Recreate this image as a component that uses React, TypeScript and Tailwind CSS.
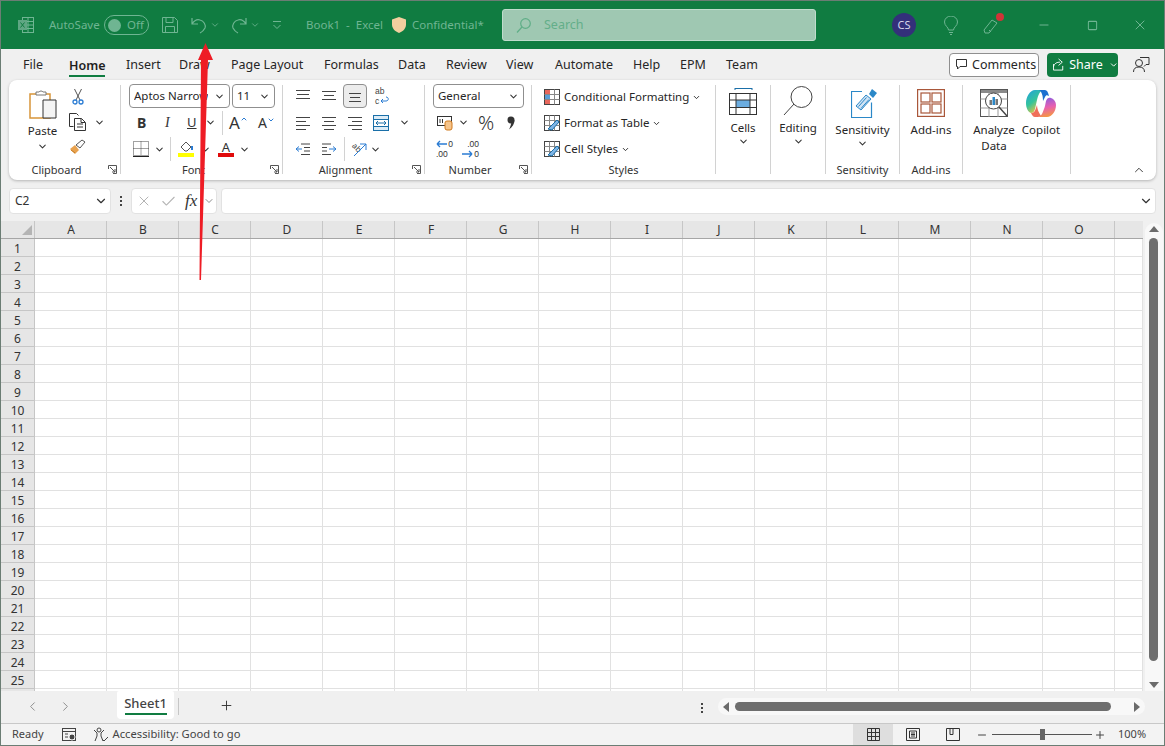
import { Check, ChevronDown, ChevronLeft, ChevronRight, ChevronUp, Minus, Plus, Square, X } from "lucide-react";

const FONT = "font-['Noto_Sans','Liberation_Sans',sans-serif]";

const TABS = [
  { label: "File", w: "w-[46px]" },
  { label: "Home", w: "w-[57px]" },
  { label: "Insert", w: "w-[53px]" },
  { label: "Draw", w: "w-[52px]" },
  { label: "Page Layout", w: "w-[93px]" },
  { label: "Formulas", w: "w-[74px]" },
  { label: "Data", w: "w-[48px]" },
  { label: "Review", w: "w-[60px]" },
  { label: "View", w: "w-[49px]" },
  { label: "Automate", w: "w-[78px]" },
  { label: "Help", w: "w-[47px]" },
  { label: "EPM", w: "w-[46px]" },
  { label: "Team", w: "w-[50px]" },
];

const COLS = ["A", "B", "C", "D", "E", "F", "G", "H", "I", "J", "K", "L", "M", "N", "O"];
const ROWS = Array.from({ length: 25 }, (_, i) => i + 1);

function Chev({ className = "" }: { className?: string }) {
  return <ChevronDown size={11} strokeWidth={2.2} className={`text-[#333] shrink-0 ${className}`} />;
}

function Lines({ rows }: { rows: [number, number, number][] }) {
  return (
    <svg width="16" height="16" viewBox="0 0 16 16" fill="none" stroke="#444">
      {rows.map(([a, b, y], i) => (
        <line key={i} x1={a} x2={b} y1={y} y2={y} />
      ))}
    </svg>
  );
}

function ExcelIcon() {
  return (
    <svg width="18" height="18" viewBox="0 0 18 18" fill="none" stroke="#6fb592" strokeWidth="1">
      <rect x="5.5" y="1.5" width="11" height="15" />
      <path d="M5.5 5.5h11M5.5 9h11M5.5 12.5h11M11 1.5v15" />
      <rect x="1.5" y="4.5" width="8" height="9" fill="#5fa683" stroke="#5fa683" />
      <path d="M3.5 6.5l4 5M7.5 6.5l-4 5" stroke="#107c41" />
    </svg>
  );
}

function TitleBar() {
  const dim = "text-[#6fb592]";
  return (
    <div className={`h-[48px] bg-[#107c41] flex items-center shrink-0 pl-[16px] ${dim} text-[11.5px] [&>*]:shrink-0`}>
      <ExcelIcon />
      <span className="ml-[14px] w-[48px] whitespace-nowrap">AutoSave</span>
      <span className="ml-[7px] w-[45px] h-[20px] rounded-full border border-[#6fb592] flex items-center pl-[3px]">
        <span className="w-[13px] h-[13px] rounded-full bg-[#6fb592]" />
        <span className="ml-[6px]">Off</span>
      </span>
      <svg className="ml-[13px]" width="16" height="16" viewBox="0 0 16 16" fill="none" stroke="#6fb592">
        <path d="M.5.5h12l3 3v12H.5zM4 .5v5h7v-5M3.5 15.500v-6h9v6" />
      </svg>
      <svg className="ml-[13px]" width="16" height="17" viewBox="0 0 16 17" fill="none" stroke="#6fb592" strokeWidth="1.2">
        <path d="M1 1v6h6M1 7c2-3 5-5 8-4 4 1 6 5 5 8-1 2-3 4-5 5" />
      </svg>
      <ChevronDown size={10} strokeWidth={2} className="ml-[3px]" />
      <svg className="ml-[11px]" width="16" height="17" viewBox="0 0 16 17" fill="none" stroke="#6fb592" strokeWidth="1.2">
        <path d="M15 1v6H9M15 7c-2-3-5-5-8-4-4 1-6 5-5 8 1 2 3 4 5 5" />
      </svg>
      <ChevronDown size={10} strokeWidth={2} className="ml-[3px]" />
      <svg className="ml-[12px]" width="10" height="10" viewBox="0 0 10 10" fill="none" stroke="#6fb592">
        <path d="M1 1.500h8M1.500 5l3.500 3.500L8.500 5" />
      </svg>
      <span className="ml-[24px] w-[78px] whitespace-pre">Book1  -  Excel</span>
      <svg className="ml-[8px]" width="14" height="16" viewBox="0 0 14 16">
        <path d="M7 0l7 2.500v5c0 4-3 7-7 8.500-4-1.500-7-4.500-7-8.500v-5z" fill="#f3cf9f" />
      </svg>
      <span className="ml-[6px] w-[71px] whitespace-nowrap">Confidential*</span>
      <div className="ml-[19px] w-[314px] h-[32px] rounded-[3px] bg-[#9fc8b2] border border-[#bfdccc] flex items-center pl-[13px] text-[#63ae89] text-[12.5px]">
        <svg width="15" height="15" viewBox="0 0 15 15" fill="none" stroke="#5fae87" strokeWidth="1.2">
          <circle cx="9.500" cy="5.500" r="4.800" />
          <path d="M6 9l-5 5.500" />
        </svg>
        <span className="ml-[13px]">Search</span>
      </div>
      <div className="ml-[76px] w-[24px] h-[24px] rounded-full bg-[#33307a] text-[#d6d6ea] text-[11px] flex items-center justify-center">CS</div>
      <svg className="ml-[28px]" width="14" height="19" viewBox="0 0 14 19" fill="none" stroke="#6fb592">
        <path d="M4.500 14c0-3-4-4-4-8a6.500 6 0 0 1 13 0c0 4-4 5-4 8zM5 16.500h4M6 18.500h2" />
      </svg>
      <div className="relative ml-[25px] w-[20px] h-[20px]">
        <svg width="20" height="20" viewBox="0 0 20 20" fill="none" stroke="#6fb592">
          <path d="M1 15l8-10 5 3-8 10H2zM6 15l2 2" />
        </svg>
        <span className="absolute right-[-1px] top-[-2px] w-[8px] h-[8px] rounded-full bg-[#d13438]" />
      </div>
      <Minus size={14} strokeWidth={1.7} className="ml-[34px]" />
      <Square size={11} strokeWidth={2.2} className="ml-[36px]" />
      <X size={16} strokeWidth={1.5} className="ml-[34px]" />
    </div>
  );
}

function TabRow() {
  return (
    <div className="h-[31px] flex items-center pl-[22px] pr-[14px] text-[12.5px] text-[#262626] shrink-0">
      {TABS.map((t) =>
        t.label === "Home" ? (
          <span key={t.label} className={`${t.w} h-[31px] flex`}>
            <span className="h-[28px] leading-[33px] border-b-[2px] border-[#107c41] font-semibold text-[#1f1f1f]">{t.label}</span>
          </span>
        ) : (
          <span key={t.label} className={`${t.w} pt-[2px]`}>{t.label}</span>
        )
      )}
      <button className="ml-auto w-[90px] h-[24px] bg-white border border-[#8f8f8f] rounded-[4px] flex items-center pl-[6px]">
        <svg width="11" height="11" viewBox="0 0 11 11" fill="none" stroke="#333">
          <path d="M.5 .5h10v7H4l-2.500 2.500v-2.500h-1z" />
        </svg>
        <span className="ml-[5px] pt-[1px]">Comments</span>
      </button>
      <button className="ml-[8px] w-[71px] h-[24px] bg-[#107c41] text-white rounded-[4px] flex items-center pl-[6px]">
        <svg width="12" height="13" viewBox="0 0 12 13" fill="none" stroke="#fff">
          <path d="M.5 6v6.500h10V8M.5 9c1-4 4-5 7-5M6 .5L10 4 6 7.500" />
        </svg>
        <span className="ml-[5px] pt-[1px]">Share</span>
        <ChevronDown size={10} strokeWidth={2.4} className="ml-[6px]" />
      </button>
      <svg className="ml-[15px]" width="17" height="17" viewBox="0 0 17 17" fill="none" stroke="#333">
        <circle cx="6" cy="7" r="3.500" />
        <path d="M.5 16c0-3.500 2-5 5.500-5s5.500 1.500 5.500 5M7 1.500h9v7h-3l-2 2" />
      </svg>
    </div>
  );
}

function Launcher() {
  return (
    <svg width="9" height="9" viewBox="0 0 9 9" fill="none" stroke="#555">
      <path d="M.5 4V.5H8.500V8.500H5M2 2l5 5M7 4v3H4" />
    </svg>
  );
}

function Group({ w, label, launcher = false, children }: { w: string; label?: string; launcher?: boolean; children: React.ReactNode }) {
  return (
    <div className={`${w} shrink-0 h-[89px] mt-[5px] border-r border-[#d2d2d2] flex flex-col relative`}>
      <div className="h-[77px] flex shrink-0">{children}</div>
      {label && <div className={`h-[12px] shrink-0 text-center leading-[12px] text-[11px] text-[#333] mt-[2px] ${launcher ? "pr-[16px]" : ""}`}>{label}</div>}
      {launcher && (
        <span className="absolute right-[3px] bottom-[0px]">
          <Launcher />
        </span>
      )}
    </div>
  );
}

function DropBox({ text, w }: { text: string; w: string }) {
  return (
    <div className={`${w} h-[24px] border border-[#8f8f8f] rounded-[4px] flex items-center justify-between px-[4px] text-[11.5px] text-[#262626]`}>
      <span className="truncate">{text}</span>
      <Chev />
    </div>
  );
}

function BigBtn({ w, label, icon, chev = false, offset = "mt-[3px]" }: { w: string; label: string; icon: React.ReactNode; chev?: boolean; offset?: string }) {
  return (
    <div className={`${w} flex flex-col items-center text-[11.5px] text-[#262626]`}>
      <div className={`${offset} h-[30px] flex items-center justify-center`}>{icon}</div>
      <div className="mt-[4px] leading-[16px] text-center whitespace-pre">{label}</div>
      {chev && <Chev />}
    </div>
  );
}

function ClipboardGroup() {
  return (
    <Group w="w-[112px]" label="Clipboard" launcher>
      <div className="ml-[19px] w-[29px] flex flex-col items-center text-[11.5px] text-[#262626]">
        <svg className="mt-[4px] shrink-0" width="28" height="30" viewBox="0 0 28 30" fill="none">
          <path d="M1 5h20v24H1z" fill="#fff" stroke="#d8953a" strokeWidth="1.5" />
          <path d="M7 6V3h3a2.500 2.500 0 0 1 4 0h3v3z" fill="#fff" stroke="#777" />
          <path d="M14 11h13v18H14z" fill="#f4f4f4" stroke="#333" />
        </svg>
        <span className="mt-[3px]">Paste</span>
        <Chev className="mt-[2px]" />
      </div>
      <div className="ml-[12px] w-[50px] flex flex-col text-[#333]">
        <svg className="ml-[3px] mt-[3px] shrink-0" width="12" height="17" viewBox="0 0 12 17" fill="none">
          <path d="M2.500 1L8 12M9.500 1L4 12" stroke="#555" />
          <circle cx="3" cy="14" r="2" stroke="#2b7cd3" strokeWidth="1.300" />
          <circle cx="9" cy="14" r="2" stroke="#2b7cd3" strokeWidth="1.300" />
        </svg>
        <div className="flex items-center mt-[8px]">
          <svg width="17" height="18" viewBox="0 0 17 18" fill="none" stroke="#333">
            <path d="M4.500 13.500H.5V.5h7l2 2M5.500 5.500h7l4 4v8h-11zM12 5.500v4h4M8 11h6M8 14h6" />
          </svg>
          <Chev className="ml-[8px]" />
        </div>
        <svg className="mt-[8px] shrink-0" width="17" height="16" viewBox="0 0 17 16">
          <path d="M1 10l5-4 4 5-4 4-2-2z" fill="#e8a24f" />
          <path d="M7 6l6-5 3 2-5 6z" fill="none" stroke="#555" />
          <path d="M2 11l4 3" stroke="#c67a1f" />
        </svg>
      </div>
    </Group>
  );
}

function FontGroup() {
  return (
    <Group w="w-[162px]" label="Font" launcher>
      <div className="pl-[8px] flex flex-col">
        <div className="flex gap-[2px] mt-[-1px] shrink-0">
          <DropBox text="Aptos Narrow" w="w-[101px]" />
          <DropBox text="11" w="w-[43px]" />
        </div>
        <div className="flex items-center h-[27px] mt-[1px] text-[#333] shrink-0">
          <span className="ml-[8px] w-[28px] text-[14px] font-bold">B</span>
          <span className="w-[22px] text-[14px] italic font-['Liberation_Serif',serif]">I</span>
          <span className="w-[18px] text-[13px] underline">U</span>
          <Chev />
          <span className="ml-[6px] w-px h-[24px] bg-[#d2d2d2]" />
          <span className="ml-[6px] text-[17px] leading-none">A</span>
          <ChevronUp size={8} strokeWidth={3} className="text-[#2b7cd3] mb-[8px]" />
          <span className="ml-[10px] text-[14px] leading-none">A</span>
          <ChevronDown size={8} strokeWidth={3} className="text-[#2b7cd3] mb-[6px]" />
        </div>
        <div className="flex items-center h-[26px] shrink-0">
          <svg className="ml-[4px]" width="16" height="16" viewBox="0 0 16 16" fill="none">
            <path d="M.5 .5h15v14H.5zM8 .5v14M.5 7.500h15" stroke="#444" strokeDasharray="1 1" />
            <path d="M0 15.500h16" stroke="#222" />
          </svg>
          <Chev className="ml-[5px]" />
          <span className="ml-[5px] w-px h-[24px] bg-[#d2d2d2]" />
          <div className="ml-[7px] flex flex-col items-center w-[16px]">
            <svg width="15" height="12" viewBox="0 0 15 12" fill="none" stroke="#555">
              <path d="M2 6l5-5 5 5-4 4H6z" />
              <path d="M13 5v4" stroke="#2b7cd3" strokeWidth="2" />
            </svg>
            <span className="w-[16px] h-[4px] bg-[#ffff00]" />
          </div>
          <Chev className="ml-[6px]" />
          <div className="ml-[7px] flex flex-col items-center w-[16px]">
            <span className="text-[13px] leading-[12px] text-[#333]">A</span>
            <span className="w-[16px] h-[4px] bg-[#e00b0b]" />
          </div>
          <Chev className="ml-[5px]" />
        </div>
      </div>
    </Group>
  );
}

function AlignmentGroup() {
  return (
    <Group w="w-[142px]" label="Alignment" launcher>
      <div className="pl-[12px] flex flex-col">
        <div className="flex items-center h-[24px] mt-[-1px] shrink-0">
          <span className="w-[26px]"><Lines rows={[[1, 15, 2.5], [2, 14, 6.5], [1, 15, 10.5]]} /></span>
          <span className="w-[26px]"><Lines rows={[[1, 15, 3.5], [3, 13, 7.5], [1, 15, 11.5]]} /></span>
          <span className="ml-[-4px] w-[24px] h-[24px] border border-[#8f8f8f] bg-[#ececec] rounded-[4px] flex items-center justify-center">
            <Lines rows={[[2, 14, 5.5], [3, 13, 9.5], [2, 14, 13.5]]} />
          </span>
          <svg className="ml-[7px]" width="16" height="20" viewBox="0 0 16 20" fill="none" fontFamily="'Liberation Sans', sans-serif">
            <text x="1" y="8" fontSize="8.5" fill="#444">ab</text>
            <text x="1" y="18" fontSize="8.5" fill="#444">c</text>
            <path d="M7 15h5c3 0 3-4 0-4M7 15l2-2M7 15l2 2" stroke="#2b7cd3" />
          </svg>
        </div>
        <div className="flex items-center h-[27px] mt-[1px] shrink-0">
          <span className="w-[26px]"><Lines rows={[[1, 15, 2.5], [1, 11, 6.5], [1, 15, 10.5], [1, 11, 14.5]]} /></span>
          <span className="w-[26px]"><Lines rows={[[1, 15, 2.5], [3, 13, 6.5], [1, 15, 10.5], [3, 13, 14.5]]} /></span>
          <span className="w-[26px]"><Lines rows={[[1, 15, 2.5], [5, 15, 6.5], [1, 15, 10.5], [5, 15, 14.5]]} /></span>
          <svg width="16" height="16" viewBox="0 0 16 16" fill="none">
            <rect x=".5" y=".5" width="15" height="15" stroke="#1a6fa8" fill="#dcecf7" />
            <path d="M.5 4.500h15M.5 11.500h15" stroke="#1a6fa8" />
            <rect x="1" y="5" width="14" height="6" fill="#fff" />
            <path d="M3 8h10M3 8l2-2M3 8l2 2M13 8l-2-2M13 8l-2 2" stroke="#1a6fa8" />
          </svg>
          <Chev className="ml-[10px]" />
        </div>
        <div className="flex items-center h-[26px] shrink-0">
          <svg className="mr-[10px]" width="16" height="16" viewBox="0 0 16 16" fill="none">
            <path d="M6 3h9M9 6.500h6M9 10h6M6 13.500h9" stroke="#444" />
            <path d="M1 8h6M1 8l3-2.500M1 8l3 2.500" stroke="#2b7cd3" />
          </svg>
          <svg className="mr-[7px]" width="16" height="16" viewBox="0 0 16 16" fill="none">
            <path d="M1 3h9M1 6.500h5M1 10h5M1 13.500h9" stroke="#444" />
            <path d="M8 8h7M15 8l-3-2.500M15 8l-3 2.500" stroke="#2b7cd3" />
          </svg>
          <span className="w-px h-[24px] bg-[#d2d2d2] mr-[6px]" />
          <svg width="17" height="16" viewBox="0 0 17 16" fill="none">
            <text x="1" y="8" fontSize="8" fill="#444" transform="rotate(45 4 6)">ab</text>
            <path d="M3 15L15 3M9 3h6v6" stroke="#2b7cd3" />
          </svg>
          <Chev className="ml-[2px]" />
        </div>
      </div>
    </Group>
  );
}

function NumberGroup() {
  return (
    <Group w="w-[107px]" label="Number" launcher>
      <div className="pl-[8px] flex flex-col">
        <div className="mt-[-1px] shrink-0">
          <DropBox text="General" w="w-[91px]" />
        </div>
        <div className="flex items-center h-[27px] mt-[1px] shrink-0">
          <svg className="ml-[4px]" width="16" height="16" viewBox="0 0 16 16" fill="none">
            <rect x=".5" y="1.500" width="14" height="9" stroke="#333" />
            <rect x="8" y="6" width="7" height="9" rx="2" fill="#f5c48b" stroke="#d07a1e" />
            <path d="M3 4v4M5.500 4v4" stroke="#333" />
          </svg>
          <Chev className="ml-[5px]" />
          <span className="ml-[9px] w-[29px] text-[20px] leading-none text-[#333] font-light">%</span>
          <svg width="8" height="14" viewBox="0 0 8 14">
            <circle cx="4" cy="4" r="3.500" fill="#333" />
            <path d="M7.500 4c0 4-2 7-5.500 9.500 1.500-3 2-5 2-6z" fill="#333" />
          </svg>
        </div>
        <div className="flex items-center h-[26px] gap-[9px] ml-[3px] shrink-0 font-['Liberation_Sans',sans-serif] text-[8.5px] leading-[10px] text-[#333]">
          <div className="w-[17px]">
            <div className="flex justify-between items-center h-[10px]">
              <svg width="11" height="8" viewBox="0 0 11 8" fill="none" stroke="#2b7cd3" strokeWidth="1.300">
                <path d="M1 4h10M1 4l3-3M1 4l3 3" />
              </svg>
              <span>0</span>
            </div>
            <div className="h-[10px]">.00</div>
          </div>
          <div className="w-[17px]">
            <div className="h-[10px] text-right">.00</div>
            <div className="flex justify-between items-center h-[10px]">
              <svg width="11" height="8" viewBox="0 0 11 8" fill="none" stroke="#2b7cd3" strokeWidth="1.300">
                <path d="M0 4h10M10 4L7 1M10 4L7 7" />
              </svg>
              <span>0</span>
            </div>
          </div>
        </div>
      </div>
    </Group>
  );
}

function StyleRow({ icon, text }: { icon: React.ReactNode; text: string }) {
  return (
    <div className="flex items-center h-[26px] text-[11.5px] text-[#262626] shrink-0">
      <span className="w-[20px]">{icon}</span>
      <span>{text}</span>
      <ChevronDown size={9} strokeWidth={2.4} className="ml-[3px]" />
    </div>
  );
}

function StylesGroup() {
  const tableIcon = (
    <svg width="16" height="16" viewBox="0 0 16 16" fill="none">
      <rect x=".5" y=".5" width="15" height="15" stroke="#444" />
      <path d="M.5 5.500h15M.5 10.500h15M5.500 .5v15M10.500 .5v15" stroke="#888" />
      <path d="M4 14L13 5l2 2-7 8z" fill="#7fb5e6" stroke="#1a6fa8" />
    </svg>
  );
  return (
    <Group w="w-[184px]" label="Styles">
      <div className="pl-[12px] flex flex-col mt-[-1px]">
        <StyleRow
          text="Conditional Formatting"
          icon={
            <svg width="16" height="16" viewBox="0 0 16 16" fill="none">
              <rect x=".5" y=".5" width="15" height="15" stroke="#444" />
              <path d="M.5 5.500h15M.5 10.500h15M10.500 .5v15" stroke="#888" />
              <rect x="1" y="1" width="5" height="4" fill="#e8675c" />
              <rect x="1" y="6" width="5" height="4" fill="#5a9fd8" />
              <rect x="1" y="11" width="5" height="4" fill="#e8675c" />
            </svg>
          }
        />
        <StyleRow text="Format as Table" icon={tableIcon} />
        <StyleRow text="Cell Styles" icon={tableIcon} />
      </div>
    </Group>
  );
}

function CellsIcon() {
  return (
    <svg width="29" height="27" viewBox="0 0 29 27" fill="none">
      <path d="M6 .5h17M6 0v2M23 0v2" stroke="#1a6fa8" />
      <rect x=".5" y="5.500" width="27" height="21" stroke="#333" />
      <rect x="7" y="12" width="14" height="8" fill="#6cade0" />
      <path d="M.5 12h27M.5 19.500h27M7 5.500v21M21 5.500v21" stroke="#333" />
    </svg>
  );
}

function MagnifierIcon() {
  return (
    <svg width="30" height="30" viewBox="0 0 30 30" fill="none" stroke="#444">
      <circle cx="18.500" cy="11" r="10.500" />
      <path d="M11 18L1 29" />
    </svg>
  );
}

function SensitivityIcon() {
  return (
    <svg className="ml-[4px]" width="27" height="30" viewBox="0 0 27 30" fill="none">
      <path d="M11 3.500H.5v26h20v-15" stroke="#2b88c8" strokeWidth="1.200" />
      <path d="M5 18L15 7l5 4-10 11z" fill="#cfe3f4" stroke="#2b88c8" />
      <path d="M18 6l3-5 5 4-4 5z" fill="#2b88c8" />
      <path d="M7.500 18.500l8-9M10 20.500l8-9" stroke="#2b88c8" />
    </svg>
  );
}

function AddinsIcon() {
  return (
    <svg width="28" height="28" viewBox="0 0 28 28" fill="none" stroke="#a9573a" strokeWidth="1.200">
      <rect x=".6" y=".6" width="26.800" height="26.800" />
      <rect x="4" y="4" width="9" height="9" />
      <rect x="15" y="4" width="9" height="9" />
      <rect x="4" y="15" width="9" height="9" />
      <rect x="15" y="15" width="9" height="9" />
    </svg>
  );
}

function AnalyzeIcon() {
  return (
    <svg width="28" height="28" viewBox="0 0 28 28" fill="none">
      <rect x=".5" y=".5" width="27" height="27" stroke="#555" />
      <rect x="1" y="1" width="26" height="3" fill="#8a8a8a" />
      <path d="M.5 10h27M.5 19h27M9 4v24M18 4v24" stroke="#999" />
      <circle cx="13.500" cy="12" r="8" fill="#fff" stroke="#444" />
      <rect x="9.500" y="11" width="2.500" height="5" fill="#777" />
      <rect x="12.500" y="8" width="2.500" height="8" fill="#2b88c8" />
      <rect x="15.500" y="10" width="2.500" height="6" fill="#777" />
      <path d="M19 18l8 9" stroke="#444" strokeWidth="1.400" />
    </svg>
  );
}

function CopilotIcon() {
  return (
    <svg width="30" height="29" viewBox="0 0 30 29" fill="none">
      <defs>
        <linearGradient id="cpa" x1="0" y1="0" x2="0.6" y2="1">
          <stop offset="0" stopColor="#1f9fe0" />
          <stop offset="0.55" stopColor="#35c49a" />
          <stop offset="1" stopColor="#f5c33b" />
        </linearGradient>
        <linearGradient id="cpb" x1="0.4" y1="0" x2="0.6" y2="1">
          <stop offset="0" stopColor="#8a5de0" />
          <stop offset="0.5" stopColor="#e85fb0" />
          <stop offset="1" stopColor="#f59a3b" />
        </linearGradient>
      </defs>
      <path d="M9 1h8c-3 1-5 5-6 10l-2 9c-1 3-2 4-4 4-3-1-5-5-5-10C0 8 4 1 9 1z" fill="url(#cpa)" />
      <path d="M21 28h-9c4-1 5-5 7-11l1-5c1-3 3-4 5-3 3 1 5 4 5 7 0 6-4 12-9 12z" fill="url(#cpb)" />
      <path d="M13 1h6c2 0 3 2 4 6-2-1-3-1-4 1l-2 4c0-5-1-9-4-11z" fill="#1c6fd0" />
      <path d="M5 24c3 0 4-2 5-5l1-3c0 4 2 8 4 11l-3 1H9c-2 0-3-2-4-4z" fill="#f0705a" />
    </svg>
  );
}

function Ribbon() {
  return (
    <div className="h-[100px] mx-[8px] bg-white rounded-[8px] shadow-[0_1px_3px_rgba(0,0,0,0.25)] flex relative shrink-0">
      <ClipboardGroup />
      <FontGroup />
      <AlignmentGroup />
      <NumberGroup />
      <StylesGroup />
      <Group w="w-[55px]">
        <BigBtn w="w-[54px]" label="Cells" icon={<CellsIcon />} chev offset="mt-[1px]" />
      </Group>
      <Group w="w-[55px]">
        <BigBtn w="w-[54px]" label="Editing" icon={<MagnifierIcon />} chev offset="mt-[1px]" />
      </Group>
      <Group w="w-[74px]" label="Sensitivity">
        <BigBtn w="w-[74px]" label="Sensitivity" icon={<SensitivityIcon />} chev />
      </Group>
      <Group w="w-[63px]" label="Add-ins">
        <BigBtn w="w-[62px]" label="Add-ins" icon={<AddinsIcon />} />
      </Group>
      <Group w="w-[108px]">
        <div className="pl-[8px] flex">
          <BigBtn w="w-[46px]" label={"Analyze\nData"} icon={<AnalyzeIcon />} />
          <BigBtn w="w-[48px]" label="Copilot" icon={<CopilotIcon />} />
        </div>
      </Group>
      <ChevronUp size={14} strokeWidth={1.6} className="absolute right-[10px] bottom-[3px] text-[#333]" />
    </div>
  );
}

function FormulaBar() {
  return (
    <div className="h-[26px] mt-[8px] mx-[8px] flex text-[12px] text-[#333] shrink-0">
      <div className="w-[102px] bg-white border border-[#e2e2e2] rounded-[4px] flex items-center justify-between pl-[5px] pr-[2px]">
        <span>C2</span>
        <ChevronDown size={14} strokeWidth={2} />
      </div>
      <div className="w-[20px] flex flex-col items-center justify-center gap-[2px]">
        <span className="w-[2px] h-[2px] bg-[#444]" />
        <span className="w-[2px] h-[2px] bg-[#444]" />
        <span className="w-[2px] h-[2px] bg-[#444]" />
      </div>
      <div className="w-[86px] bg-white border border-[#e2e2e2] rounded-[4px] flex items-center pl-[4px]">
        <X size={16} strokeWidth={1.5} className="text-[#b4b4b4]" />
        <Check size={17} strokeWidth={1.5} className="ml-[8px] text-[#b4b4b4]" />
        <span className="ml-[8px] italic font-['Liberation_Serif',serif] text-[17px] text-[#333]">fx</span>
        <ChevronDown size={12} strokeWidth={1.5} className="ml-auto mr-[1px] text-[#666]" />
      </div>
      <div className="ml-[4px] flex-1 bg-white border border-[#e2e2e2] rounded-[4px] flex items-center justify-end pr-[2px]">
        <ChevronDown size={14} strokeWidth={2} />
      </div>
    </div>
  );
}

function Grid() {
  return (
    <div className="mt-[7px] h-[470px] flex shrink-0 overflow-hidden text-[12px] text-[#333]">
      <div className="flex-1 flex flex-col min-w-0 overflow-hidden">
        <div className="h-[18px] flex bg-[#e6e6e6] border-b border-[#a6a6a6] shrink-0">
          <div className="w-[34px] shrink-0 border-r border-[#c6c6c6] flex items-end justify-end pr-[2px] pb-[3px]">
            <span className="w-0 h-0 border-l-[10px] border-l-transparent border-b-[10px] border-b-[#b4b4b4]" />
          </div>
          {COLS.map((c) => (
            <div key={c} className="w-[72px] shrink-0 border-r border-[#c6c6c6] text-center leading-[18px] pl-[1px]">{c}</div>
          ))}
          <div className="flex-1" />
        </div>
        {ROWS.map((r) => (
          <div key={r} className="h-[18px] flex bg-white shrink-0">
            <div className="w-[34px] shrink-0 bg-[#e6e6e6] border-r border-b border-[#c6c6c6] text-center leading-[19px]">{r}</div>
            {COLS.map((c) => (
              <div key={c} className="w-[72px] shrink-0 border-r border-b border-[#e1e1e1]" />
            ))}
            <div className="flex-1 border-b border-r border-[#e1e1e1]" />
          </div>
        ))}
        <div className="h-[2px] flex bg-white shrink-0">
          <div className="w-[34px] shrink-0 bg-[#e6e6e6] border-r border-[#c6c6c6]" />
          {COLS.map((c) => (
            <div key={c} className="w-[72px] shrink-0 border-r border-[#e1e1e1]" />
          ))}
          <div className="flex-1 border-r border-[#e1e1e1]" />
        </div>
      </div>
      <div className="w-[21px] shrink-0 bg-[#f0f0f0] flex flex-col items-center pt-[2px]">
        <div className="w-[18px] h-full bg-[#f8f8f8] rounded-t-full flex flex-col items-center">
          <span className="mt-[3px] w-0 h-0 border-x-[5px] border-x-transparent border-b-[6px] border-b-[#6b6b6b]" />
          <span className="mt-[6px] w-[9px] h-[423px] rounded-full bg-[#6e6e6e] shrink-0" />
          <span className="mt-[21px] w-0 h-0 border-x-[5px] border-x-transparent border-t-[6px] border-t-[#6b6b6b]" />
        </div>
      </div>
    </div>
  );
}

function SheetBar() {
  return (
    <div className="h-[32px] flex items-start shrink-0 text-[#333]">
      <ChevronLeft size={15} strokeWidth={1.5} className="ml-[24px] mt-[8px] text-[#888]" />
      <ChevronRight size={15} strokeWidth={1.5} className="ml-[18px] mt-[8px] text-[#888]" />
      <div className="ml-[44px] w-[57px] h-[28px] bg-white rounded-b-[4px] rounded-t-[2px] flex flex-col items-center pt-[3px] text-[13px] font-medium">
        <span className="leading-[18px] text-[#444]">Sheet1</span>
        <span className="w-[42px] h-[2px] bg-[#107c41] mt-[1px]" />
      </div>
      <span className="ml-[4px] mt-[7px] w-px h-[17px] bg-[#c6c6c6]" />
      <Plus size={15} strokeWidth={1.5} className="ml-[40px] mt-[7px]" />
      <div className="ml-auto mt-[12px] flex flex-col gap-[2px] items-center mr-[15px]">
        <span className="w-[2px] h-[2px] bg-[#444]" />
        <span className="w-[2px] h-[2px] bg-[#444]" />
        <span className="w-[2px] h-[2px] bg-[#444]" />
      </div>
      <div className="mr-[19px] mt-[7px] w-[427px] h-[17px] bg-[#f8f8f8] rounded-full flex items-center px-[5px]">
        <span className="w-0 h-0 border-y-[5px] border-y-transparent border-r-[6px] border-r-[#6b6b6b]" />
        <span className="ml-[6px] w-[376px] h-[9px] rounded-full bg-[#6e6e6e]" />
        <span className="ml-auto w-0 h-0 border-y-[5px] border-y-transparent border-l-[6px] border-l-[#6b6b6b]" />
      </div>
    </div>
  );
}

function StatusBar() {
  return (
    <div className="h-[22px] bg-[#f3f3f3] border-t border-[#c8c8c8] flex items-center shrink-0 text-[11px] text-[#444]">
      <span className="ml-[11px]">Ready</span>
      <svg className="ml-[18px]" width="15" height="14" viewBox="0 0 15 14" fill="none" stroke="#444">
        <rect x=".5" y=".5" width="13" height="12" />
        <path d="M.5 3.500h13M3 6h3M3 9h3" />
        <circle cx="10" cy="9" r="3" fill="#444" stroke="#f3f3f3" />
      </svg>
      <svg className="ml-[16px]" width="16" height="16" viewBox="0 0 16 16" fill="none" stroke="#444">
        <circle cx="6" cy="3" r="2" />
        <path d="M1 3l3 3v3l-2 5M11 3L8 6v3l2 5M9 12l2 2 4-4" />
      </svg>
      <span className="ml-[4px] text-[11.2px]">Accessibility: Good to go</span>
      <div className="ml-auto w-[40px] h-[21px] bg-[#dedede] flex items-center justify-center">
        <svg width="13" height="13" viewBox="0 0 13 13" fill="none" stroke="#333">
          <path d="M.5 .5h12v12H.5zM.5 4.500h12M.5 8.500h12M4.500 .5v12M8.500 .5v12" />
        </svg>
      </div>
      <svg className="ml-[13px]" width="14" height="13" viewBox="0 0 14 13" fill="none" stroke="#333">
        <path d="M.5 .5h13v12H.5zM3.500 3h7v7h-7zM5 5h4M5 6.500h4M5 8h4" />
      </svg>
      <svg className="ml-[26px]" width="14" height="13" viewBox="0 0 14 13" fill="none" stroke="#333">
        <path d="M.5 .5h13v12H.5zM4 .5v6h3v-6" />
      </svg>
      <Minus size={12} strokeWidth={2} className="ml-[16px]" />
      <div className="ml-[4px] w-[100px] h-px bg-[#555] relative">
        <span className="absolute left-[48px] top-[-5px] w-[5px] h-[11px] bg-[#666]" />
      </div>
      <Plus size={12} strokeWidth={2} className="ml-[2px]" />
      <span className="ml-[12px] mr-[19px] w-[27px] whitespace-nowrap">100%</span>
    </div>
  );
}

export default function App() {
  return (
    <div className={`w-[1165px] h-[746px] relative overflow-hidden bg-[#f0f0f0] border border-[#6b7d74] flex flex-col ${FONT}`}>
      <TitleBar />
      <TabRow />
      <Ribbon />
      <FormulaBar />
      <Grid />
      <SheetBar />
      <StatusBar />
      {/* red annotation arrow */}
      <svg className="absolute left-[-1px] top-[-1px] pointer-events-none" width="1165" height="746" fill="none">
        <path d="M205.500 43L213 60H208L201 280H199.500L201 60H198z" fill="#ee1c25" />
      </svg>
    </div>
  );
}
